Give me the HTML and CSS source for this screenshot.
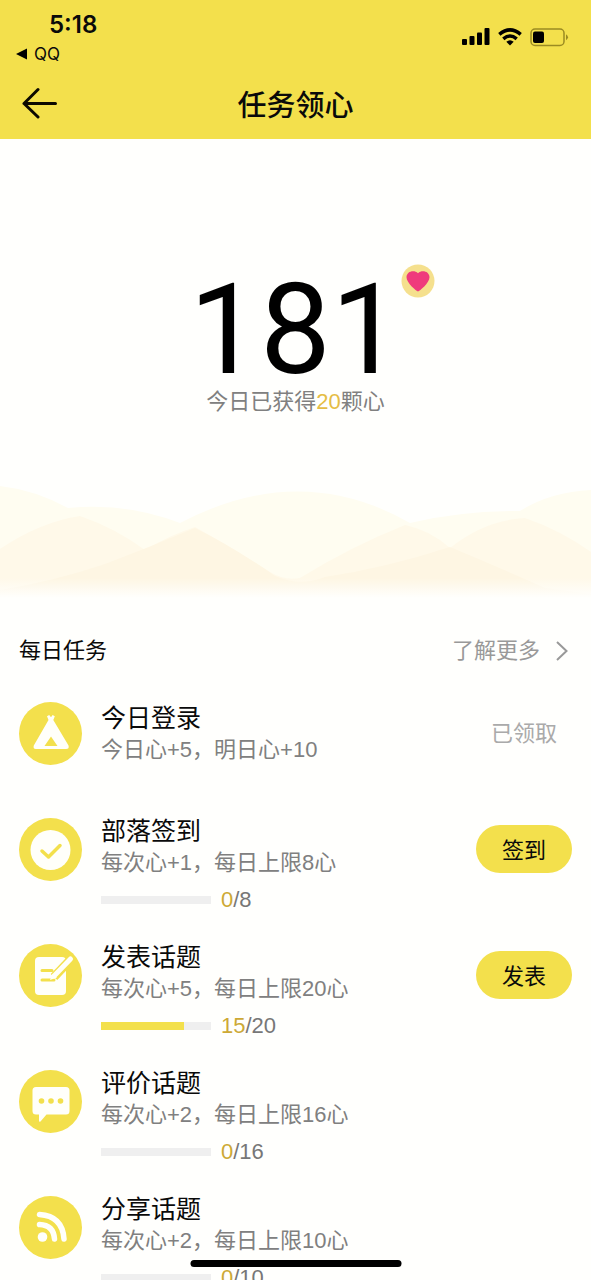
FILE: index.html
```
<!DOCTYPE html>
<html lang="zh-CN">
<head>
<meta charset="utf-8">
<meta name="viewport" content="width=device-width, initial-scale=1">
<title>任务领心</title>
<link rel="stylesheet" href="styles.css">
</head>
<body>
<div class="app">
  <header class="top">
    <div class="status">
      <div class="status-left">
        <span class="clock">5:18</span>
        <a class="return-app" href="#"><svg width="12" height="12" viewBox="0 0 12 12" aria-hidden="true"><path d="M0 6 11 .5v11z"/></svg>QQ</a>
      </div>
      <div class="status-icons">
        <svg width="28" height="18" viewBox="0 0 28 18" aria-hidden="true"><rect x="0" y="11" width="5" height="6" rx="1"/><rect x="7.500" y="8" width="5" height="9" rx="1"/><rect x="15" y="4.500" width="5" height="12.500" rx="1"/><rect x="22.500" y="0" width="5" height="17" rx="1"/></svg>
        <svg width="24" height="18" viewBox="0 0 24 18" aria-hidden="true"><g fill="none" stroke="#000" stroke-width="3.500"><path d="M1.300 6.400Q12-2.600 22.700 6.400"/><path d="M5.300 10.800Q12 5.200 18.700 10.800"/></g><path d="M12 17.500 8.300 13.800Q12 10.800 15.700 13.800Z"/></svg>
        <svg width="39" height="19" viewBox="0 0 39 19" aria-hidden="true"><rect x="1" y="1" width="33" height="16.500" rx="4" fill="none" stroke="#9b8b22" stroke-width="1.500"/><rect x="3" y="3.500" width="11" height="11.500" rx="2"/><path d="M36 6.200q4 3 0 6z" fill="#9b8b22"/></svg>
      </div>
    </div>
    <nav class="nav">
      <button class="back" type="button" aria-label="返回"><svg width="36" height="32" viewBox="0 0 36 32" fill="none" stroke="#0c0900" stroke-width="3" stroke-linecap="round" stroke-linejoin="round"><path d="M16 2.500 2 16.500 16 30M2 16.500H33.500"/></svg></button>
      <h1 class="nav-title">任务领心</h1>
    </nav>
  </header>

  <main class="content">
    <section class="hero">
      <div class="score">181
        <svg class="heart" width="34" height="34" viewBox="0 0 34 34" aria-hidden="true"><circle cx="17" cy="17" r="16.500" fill="#f5e08d"/><path d="M17 27.500C15.500 27.300 5.500 19 5.500 13.300 5.500 7.400 13 5.600 17 9.200 21 5.600 28.500 7.400 28.500 13.300 28.500 19 18.500 27.300 17 27.500Z" fill="#ef3b7c"/></svg>
      </div>
      <p class="today">今日已获得<span class="gold">20</span>颗心</p>
      <svg class="hills" viewBox="0 0 591 130" preserveAspectRatio="none" aria-hidden="true">
        <defs>
          <linearGradient id="fade" x1="0" y1="0" x2="0" y2="1"><stop offset="0" stop-color="#fffffd" stop-opacity="0"/><stop offset="1" stop-color="#fffffd"/></linearGradient>
        </defs>
        <path d="M0 6Q35 10 68 28Q125 22 180 43Q300-20 410 43Q460 31 520 31Q550 12 591 10V117H0Z" fill="#fffdf1"/>
        <path d="M0 69Q40 42 80 36Q115 48 145 70Q170 55 195 47Q235 69 270 92Q285 101 300 98Q350 67 405 45Q430 50 450 68Q485 40 525 38Q560 50 591 72V117H0Z" fill="#fff9e9"/>
        <path d="M0 110Q55 101 105 84Q150 67 195 48Q235 68 275 96Q300 107 325 97Q385 88 450 67Q505 90 545 108L591 114V119H0Z" fill="#fef6e3"/>
        <rect y="98" width="591" height="20" fill="url(#fade)"/>
        <rect y="118" width="591" height="12" fill="#fffffd"/>
      </svg>
    </section>

    <section class="tasks">
      <div class="tasks-head">
        <h2 class="tasks-title">每日任务</h2>
        <a class="more" href="#">了解更多<svg width="12" height="20" viewBox="0 0 12 20" fill="none" stroke="#999" stroke-width="2"><path d="M1 1 10.500 10 1 19"/></svg></a>
      </div>
      <ul class="list">
        <li class="task task-simple">
          <svg class="icon" viewBox="0 0 63 63" aria-hidden="true"><circle cx="31.500" cy="31.500" r="31.500" fill="#f3e04c"/><path d="M29.500 18 28 14.200l2.200-1.200 1.800 2.200 1.600-2.200 2.200 1.200-1.500 3.800L49.500 43.500Q50.500 47 47 47H17Q13.800 47 14.800 43.500Z" fill="#fffffa"/><path d="M32 34.500 38.500 44H25.500Z" fill="#f3e04c"/></svg>
          <div class="info"><h3 class="name">今日登录</h3><p class="desc">今日心+5，明日心+10</p></div>
          <span class="claimed">已领取</span>
        </li>
        <li class="task">
          <svg class="icon" viewBox="0 0 63 63" aria-hidden="true"><circle cx="31.500" cy="31.500" r="31.500" fill="#f3e04c"/><circle cx="31.500" cy="32" r="20" fill="#fffffa"/><path d="M23 33 29.500 39 41 27.500" fill="none" stroke="#f3e04c" stroke-width="3.500" stroke-linecap="round" stroke-linejoin="round"/></svg>
          <div class="info"><h3 class="name">部落签到</h3><p class="desc">每次心+1，每日上限8心</p>
            <div class="progress"><div class="bar"></div><span><span class="now">0</span>/8</span></div></div>
          <button class="action" type="button">签到</button>
        </li>
        <li class="task">
          <svg class="icon" viewBox="0 0 63 63" aria-hidden="true"><circle cx="31.500" cy="31.500" r="31.500" fill="#f3e04c"/><rect x="16" y="13" width="31" height="38" rx="4" fill="#fffffa"/><path d="M35 33 53 14" stroke="#f3e04c" stroke-width="9" fill="none"/><path d="M23 26.500H33M23 36H35" stroke="#f3e04c" stroke-width="3" stroke-linecap="round"/><path d="M36 31 51.500 15" stroke="#fffffa" stroke-width="5" stroke-linecap="round"/><path d="M33.500 29.500 38 33.500 31 36Z" fill="#fffffa"/></svg>
          <div class="info"><h3 class="name">发表话题</h3><p class="desc">每次心+5，每日上限20心</p>
            <div class="progress"><div class="bar"><div class="fill" style="width:75%"></div></div><span><span class="now">15</span>/20</span></div></div>
          <button class="action" type="button">发表</button>
        </li>
        <li class="task">
          <svg class="icon" viewBox="0 0 63 63" aria-hidden="true"><circle cx="31.500" cy="31.500" r="31.500" fill="#f3e04c"/><path d="M17 17H47Q50.500 17 50.500 20.500V41Q50.500 44.500 47 44.500H27.500L21.500 51.500Q20 52.500 20 50.500V44.500H17Q13.500 44.500 13.500 41V20.500Q13.500 17 17 17Z" fill="#fffffa"/><g fill="#f3e04c"><circle cx="22.500" cy="31" r="2.800"/><circle cx="32" cy="31" r="2.800"/><circle cx="41.500" cy="31" r="2.800"/></g></svg>
          <div class="info"><h3 class="name">评价话题</h3><p class="desc">每次心+2，每日上限16心</p>
            <div class="progress"><div class="bar"></div><span><span class="now">0</span>/16</span></div></div>
        </li>
        <li class="task">
          <svg class="icon" viewBox="0 0 63 63" aria-hidden="true"><circle cx="31.500" cy="31.500" r="31.500" fill="#f3e04c"/><circle cx="23.500" cy="41" r="4.800" fill="#fffffa"/><g fill="none" stroke="#fffffa" stroke-width="5.500" stroke-linecap="round"><path d="M20.500 28.500Q34.500 29 35.500 43"/><path d="M20.500 18.500Q43.500 20 45 43"/></g></svg>
          <div class="info"><h3 class="name">分享话题</h3><p class="desc">每次心+2，每日上限10心</p>
            <div class="progress"><div class="bar"></div><span><span class="now">0</span>/10</span></div></div>
        </li>
      </ul>
    </section>
  </main>
  <div class="home-indicator"></div>
</div>
</body>
</html>
```
FILE: styles.css
```
* { box-sizing: border-box; }

body, h1, h2, h3, p, ul { margin: 0; padding: 0; }

body {
  background: #fffffd;
  color: #0a0a0a;
  font-family: "Liberation Sans", "Noto Sans CJK SC", sans-serif;
  font-size: 22px;
}

h1, h2, h3 { font-weight: 400; }
a { color: inherit; text-decoration: none; }
button { border: 0; padding: 0; color: inherit; font: inherit; cursor: pointer; }
svg { display: block; flex: none; }

.app {
  position: relative;
  display: flex;
  flex-direction: column;
  height: 100vh;
  overflow: hidden;
}

.top {
  flex: none;
  background: #f3e04c;
}

.status {
  display: flex;
  justify-content: space-between;
  padding: 11px 22px 0 16px;
}

.status-left {
  display: flex;
  flex-direction: column;
  gap: 5px;
}

.clock {
  padding-left: 33px;
  font-family: Inter, "Liberation Sans", sans-serif;
  font-size: 24px;
  font-weight: 600;
  line-height: 28px;
}

.return-app {
  display: flex;
  align-items: center;
  gap: 6px;
  font-family: Inter, "Liberation Sans", sans-serif;
  font-size: 17px;
  line-height: 20px;
}

.status-icons {
  display: flex;
  align-items: center;
  gap: 8px;
  height: 52px;
}

.nav {
  display: grid;
  grid-template-columns: 36px 1fr 36px;
  align-items: center;
  height: 75px;
  padding: 2px 22px 0;
}

.back { background: none; }

.nav-title {
  padding-top: 6px;
  font-size: 29px;
  font-weight: 500;
  line-height: 40px;
  text-align: center;
}

.content {
  flex: 1;
  min-height: 0;
  overflow-y: auto;
  scrollbar-width: none;
}

.hero {
  display: flex;
  flex-direction: column;
  align-items: center;
  padding-top: 135px;
}

.score {
  position: relative;
  color: #000;
  font-family: Roboto, "Liberation Sans", sans-serif;
  font-size: 126px;
  line-height: 112px;
}

.heart {
  position: absolute;
  top: -10px;
  right: -33px;
}

.today {
  color: #808080;
  line-height: 32px;
}

.gold { color: #e5bd45; }

.hills {
  width: 100%;
  height: 130px;
  margin-top: 62px;
}

.tasks { padding: 25px 19px 0; }

.tasks-head {
  display: flex;
  justify-content: space-between;
  align-items: center;
  line-height: 32px;
}

.tasks-title { font-size: 22px; }

.more {
  display: flex;
  align-items: center;
  gap: 16px;
  padding-right: 4px;
  color: #999;
}

.list {
  padding-top: 35px;
  list-style: none;
}

.task {
  display: flex;
  align-items: flex-start;
  padding-bottom: 25px;
}

.icon {
  width: 63px;
  height: 63px;
  margin: 3px 19px 0 0;
}

.info { flex: 1; }

.name {
  font-size: 25px;
  line-height: 32px;
}

.desc {
  color: #808080;
  line-height: 32px;
}

.progress {
  display: flex;
  align-items: center;
  gap: 10px;
  margin-top: 5px;
  color: #777;
  line-height: 32px;
}

.bar {
  width: 110px;
  height: 8px;
  background: #efefef;
}

.fill {
  height: 100%;
  background: #f3e04c;
}

.now { color: #cda935; }

.action {
  width: 96px;
  height: 48px;
  margin-top: 10px;
  padding-bottom: 2px;
  border-radius: 24px;
  background: #f3e04c;
}

.task-simple { padding-bottom: 49px; }
.task-simple .icon { margin-top: 0; }

.claimed {
  padding-right: 15px;
  color: #aaa;
  line-height: 64px;
}

.home-indicator {
  position: absolute;
  bottom: 13px;
  left: 50%;
  width: 211px;
  height: 7px;
  border-radius: 4px;
  background: #000;
  transform: translateX(-50%);
}
```
